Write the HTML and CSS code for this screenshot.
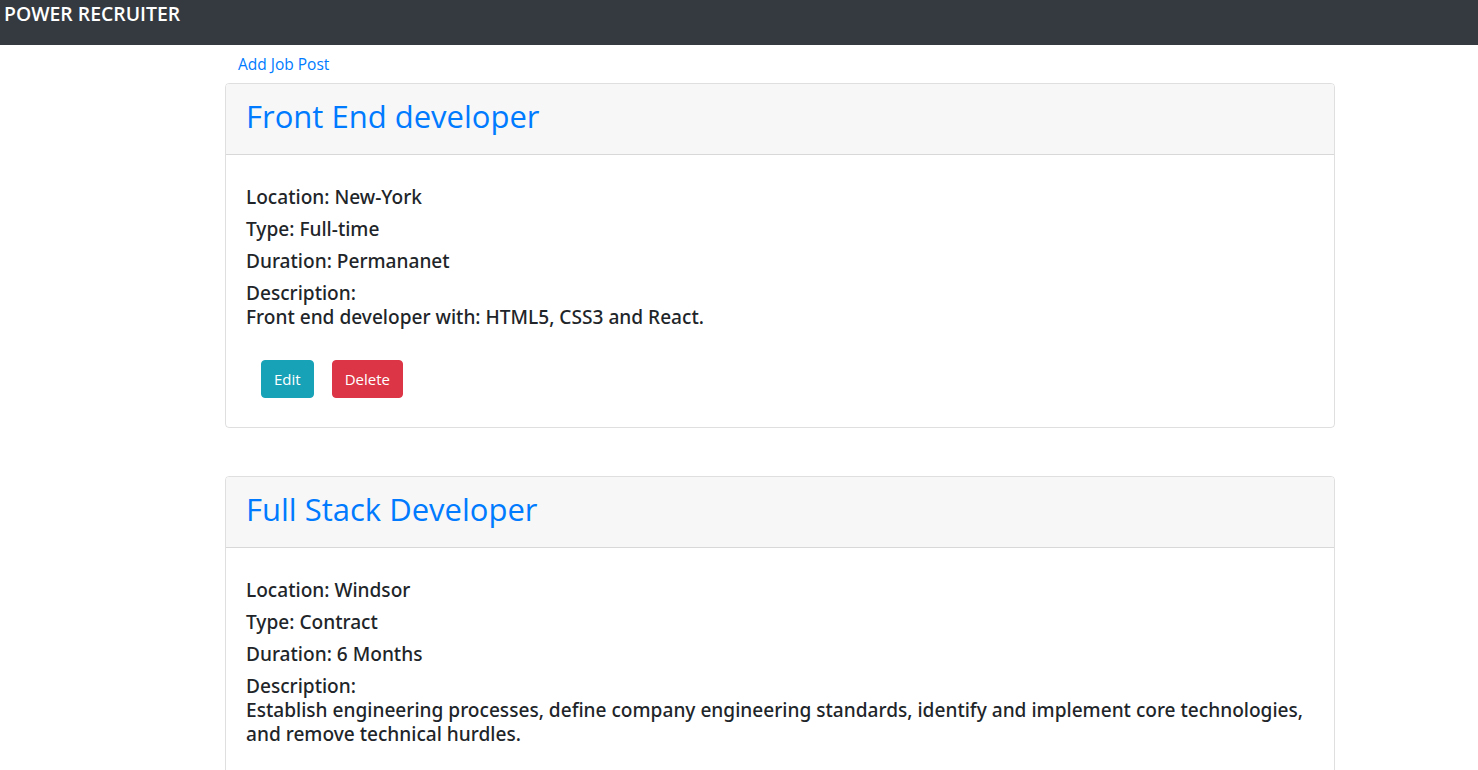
FILE: index.html
```html
<!DOCTYPE html>
<html>
<head>
<meta charset="utf-8">
<title>Power Recruiter</title>
<link rel="stylesheet" href="styles.css">
</head>
<body>
<nav class="navbar"><span class="brand">POWER RECRUITER</span></nav>
<main class="container">
  <a class="add-link" href="#">Add Job Post</a>
  <section class="card">
    <header class="card-header"><h2 class="card-title">Front End developer</h2></header>
    <div class="card-body">
      <h5 class="field">Location: New-York</h5>
      <h5 class="field">Type: Full-time</h5>
      <h5 class="field">Duration: Permananet</h5>
      <h5 class="field">Description:<br>Front end developer with: HTML5, CSS3 and React.</h5>
      <div class="actions">
        <button class="btn btn-edit">Edit</button>
        <button class="btn btn-delete">Delete</button>
      </div>
    </div>
  </section>
  <section class="card">
    <header class="card-header"><h2 class="card-title">Full Stack Developer</h2></header>
    <div class="card-body">
      <h5 class="field">Location: Windsor</h5>
      <h5 class="field">Type: Contract</h5>
      <h5 class="field">Duration: 6 Months</h5>
      <h5 class="field">Description:<br>Establish engineering processes, define company engineering standards, identify and implement core technologies, and remove technical hurdles.</h5>
      <div class="actions">
        <button class="btn btn-edit">Edit</button>
        <button class="btn btn-delete">Delete</button>
      </div>
    </div>
  </section>
</main>
</body>
</html>
```
FILE: styles.css
```css
* { box-sizing: border-box; }
body {
  margin: 0;
  font-family: "Open Sans", "Noto Sans", sans-serif;
  color: #212529;
  background: #fff;
  font-size: 16px;
  line-height: 1.5;
}
.navbar {
  background: #343a40;
  height: 45px;
  padding: 2px 4px;
}
.brand {
  color: #fff;
  font-size: 19.4px;
  font-weight: 600;
  line-height: 24px;
}
.container {
  width: 1110px;
  margin-left: 225px;
  padding-top: 7px;
}
.add-link {
  display: inline-block;
  color: #007bff;
  text-decoration: none;
  font-size: 15.5px;
  line-height: 24px;
  margin-left: 13px;
  margin-bottom: 7px;
}
.card {
  border: 1px solid rgba(0,0,0,.125);
  border-radius: 4px;
  margin-bottom: 48px;
  overflow: hidden;
}
.card-header {
  background: #f7f7f7;
  border-bottom: 1px solid rgba(0,0,0,.125);
  padding: 13px 20px 11px;
}
.card-title {
  margin: 0 0 8px;
  font-size: 31px;
  font-weight: 500;
  line-height: 38px;
  color: #007bff;
}
.card-body {
  padding: 30px 20px 29px;
}
.field {
  margin: 0 0 8px;
  font-family: "Noto Sans", "Open Sans", sans-serif;
  font-size: 19.1px;
  font-weight: 500;
  line-height: 24px;
}
.actions {
  display: flex;
  gap: 18px;
  padding: 23px 0 0 15px;
}
.btn {
  font-family: inherit;
  font-size: 15px;
  line-height: 24px;
  padding: 6px 12px;
  border: 1px solid transparent;
  border-radius: 4px;
  color: #fff;
  cursor: pointer;
}
.btn-edit { background: #17a2b8; border-color: #17a2b8; }
.btn-delete { background: #dc3545; border-color: #dc3545; }
```
